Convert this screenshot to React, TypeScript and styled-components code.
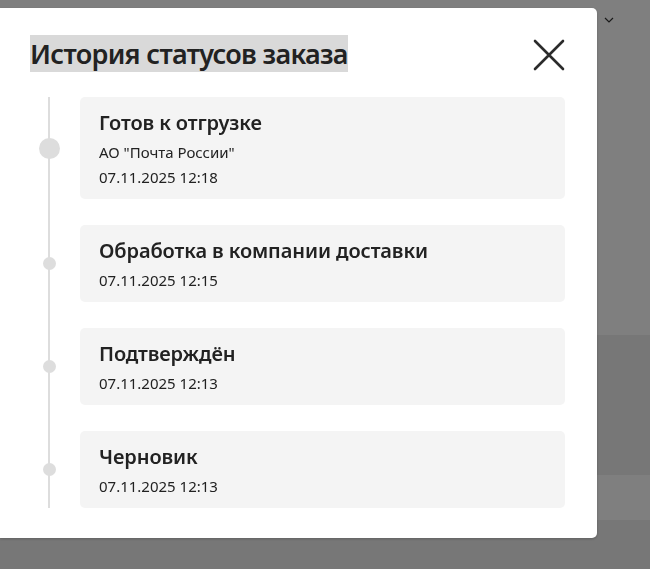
import styled, { createGlobalStyle } from "styled-components";

const GlobalStyle = createGlobalStyle`
  html, body {
    margin: 0;
    padding: 0;
    background: #fff;
    font-family: "Noto Sans", "Liberation Sans", sans-serif;
  }
`;

type StatusItem = {
  title: string;
  subtitle?: string;
  date: string;
  current?: boolean;
};

const items: StatusItem[] = [
  { title: "Готов к отгрузке", subtitle: 'АО "Почта России"', date: "07.11.2025 12:18", current: true },
  { title: "Обработка в компании доставки", date: "07.11.2025 12:15" },
  { title: "Подтверждён", date: "07.11.2025 12:13" },
  { title: "Черновик", date: "07.11.2025 12:13" },
];

export default function App() {
  return (
    <>
      <GlobalStyle />
      <Page>
        <Page.Band height={335}>
          <Page.Chevron>
            <svg width="10" height="6" viewBox="0 0 10 6" fill="none">
              <path d="M1 1l4 4 4-4" stroke="#333" strokeWidth="1.2" />
            </svg>
          </Page.Chevron>
        </Page.Band>
        <Page.Band height={140} shade />
        <Page.Band height={45} />
        <Page.Band height={49} shade />
      </Page>
      <Overlay>
        <Modal>
          <Modal.Head>
            <Modal.Title>История статусов заказа</Modal.Title>
            <Modal.Close aria-label="Закрыть">
              <svg width="32" height="32" viewBox="0 0 32 32" fill="none">
                <path d="M2 2l28 28M30 2L2 30" stroke="#2b2b2b" strokeWidth="2.6" strokeLinecap="round" />
              </svg>
            </Modal.Close>
          </Modal.Head>
          <Timeline>
            {items.map((item) => (
              <Timeline.Row key={item.title + item.date}>
                <Timeline.Rail>
                  <Timeline.Dot current={item.current} />
                </Timeline.Rail>
                <Card>
                  <Card.Title>{item.title}</Card.Title>
                  {item.subtitle && <Card.Text>{item.subtitle}</Card.Text>}
                  <Card.Text>{item.date}</Card.Text>
                </Card>
              </Timeline.Row>
            ))}
          </Timeline>
        </Modal>
      </Overlay>
    </>
  );
}

const Page = Object.assign(
  styled.div`
    display: flex;
    flex-direction: column;
    width: 650px;
    height: 569px;
    overflow: hidden;
  `,
  {
    Chevron: styled.span`
      display: flex;
      justify-content: flex-end;
      padding: 17px 36px 0 0;
    `,
    Band: styled.div<{ height: number; shade?: boolean }>`
      flex: none;
      box-sizing: border-box;
      height: ${(p) => p.height}px;
      background: ${(p) => (p.shade ? "#eeeeee" : "#ffffff")};
    `,
  }
);

const Overlay = styled.div`
  position: fixed;
  inset: 0;
  background: rgba(0, 0, 0, 0.5);
  padding-top: 8px;
`;

const Modal = Object.assign(
  styled.div`
    width: 597px;
    height: 530px;
    box-sizing: border-box;
    background: #fff;
    border-radius: 0 5px 5px 0;
    box-shadow: 0 1px 3px rgba(0, 0, 0, 0.2);
    padding: 27px 32px 0 30px;
  `,
  {
    Head: styled.div`
      display: flex;
      align-items: flex-start;
      justify-content: space-between;
    `,
    Title: styled.h2`
      margin: 0;
      background: #d9d9d9;
      font-size: 27px;
      font-weight: 600;
      line-height: 37px;
      color: #222;
      letter-spacing: -0.7px;
    `,
    Close: styled.button`
      display: flex;
      border: 0;
      padding: 0;
      margin: 4px 0 0;
      background: none;
      cursor: pointer;
    `,
  }
);

const Timeline = Object.assign(
  styled.div`
    display: flex;
    flex-direction: column;
    gap: 26px;
    margin-top: 25px;
    position: relative;
    &::before {
      content: "";
      position: absolute;
      left: 18px;
      top: 0;
      bottom: 0;
      width: 1.5px;
      background: #dddddd;
    }
  `,
  {
    Row: styled.div`
      display: flex;
    `,
    Rail: styled.div`
      flex: none;
      width: 50px;
      display: flex;
      align-items: center;
      position: relative;
    `,
    Dot: styled.span<{ current?: boolean }>`
      position: relative;
      width: ${(p) => (p.current ? 21 : 13)}px;
      height: ${(p) => (p.current ? 21 : 13)}px;
      margin-left: ${(p) => (p.current ? 8.5 : 12.5)}px;
      border-radius: 50%;
      background: #dddddd;
    `,
  }
);

const Card = Object.assign(
  styled.div`
    flex: 1;
    background: #f4f4f4;
    border-radius: 5px;
    padding: 14px 19px 9px;
    color: #222;
  `,
  {
    Title: styled.div`
      font-size: 20px;
      font-weight: 600;
      line-height: 24px;
      margin-bottom: 5px;
      letter-spacing: -0.1px;
    `,
    Text: styled.div`
      font-size: 15px;
      line-height: 25px;
      letter-spacing: 0;
    `,
  }
);
